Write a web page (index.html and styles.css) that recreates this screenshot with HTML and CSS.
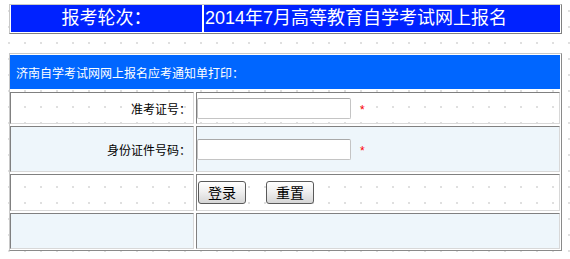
FILE: index.html
```html
<!DOCTYPE html>
<html lang="zh">
<head>
<meta charset="utf-8">
<title>网上报名</title>
<link rel="stylesheet" href="styles.css">
</head>
<body>
<div class="page">
  <div class="topbar">
    <div class="tcell tlabel">报考轮次：</div>
    <div class="tcell tvalue">2014年7月高等教育自学考试网上报名</div>
  </div>

  <form class="form">
    <div class="head">济南自学考试网网上报名应考通知单打印：</div>

    <div class="cell lab r1">准考证号：</div>
    <div class="cell fld r1"><input class="inp" type="text"><span class="req">*</span></div>

    <div class="cell lab r2 alt">身份证件号码：</div>
    <div class="cell fld r2 alt"><input class="inp" type="text"><span class="req">*</span></div>

    <div class="cell r3"></div>
    <div class="cell fld r3"><button class="btn" type="button">登录</button><button class="btn" type="button">重置</button></div>

    <div class="cell r4 alt"></div>
    <div class="cell r4 alt"></div>
  </form>
</div>
</body>
</html>
```

FILE: styles.css
```css
html, body {
  margin: 0;
  padding: 0;
}
body {
  background-color: #ffffff;
  background-image: radial-gradient(circle, #d6d6d6 0.6px, transparent 1.1px);
  background-size: 16px 16px;
  background-position: 1px 3px;
  font-family: "Noto Sans CJK SC", "Liberation Sans", sans-serif;
  font-size: 12px;
  color: #000;
}
.page {
  padding: 4px 0 0 9px;
  width: 553px;
}
.topbar {
  display: flex;
  gap: 2px;
  padding: 0 1px;
  height: 30px;
  box-sizing: border-box;
  border: 1px solid;
  border-color: #c8c8c8 #808080 #808080 #c8c8c8;
  background: #ffffff;
}
.tcell {
  background: #0022ff;
  color: #ffffff;
  font-size: 18px;
  line-height: 27px;
  height: 27px;
  font-family: "Liberation Sans", "Noto Sans CJK SC", sans-serif;
}
.tlabel {
  width: 191px;
  text-align: center;
}
.tvalue {
  flex: 1;
  padding-left: 1px;
}
.form {
  margin: 19px 0 0 0;
  display: grid;
  grid-template-columns: 184px 1fr;
  grid-template-rows: 35px 32px 46px 37px 36px;
  column-gap: 2px;
  row-gap: 2px;
  padding: 1px 1px 1px 0;
  border: 1px solid;
  border-color: #c8c8c8 #8a8a8a #8a8a8a #c8c8c8;
  box-sizing: border-box;
  width: 553px;
}
.head {
  grid-column: 1 / 3;
  background: #0066ff;
  color: #ffffff;
  padding-left: 6px;
  display: flex;
  align-items: center;
  font-size: 12px;
  border-bottom: 1px solid #ffffff;
}
.cell {
  border: 1px solid;
  border-color: #808080 #d8d8d8 #d8d8d8 #808080;
  display: flex;
  align-items: center;
}
.alt {
  background: #eef6fb;
}
.lab {
  justify-content: flex-end;
  padding-right: 2px;
}
.fld {
  padding-left: 0;
}
.inp {
  width: 154px;
  height: 21px;
  box-sizing: border-box;
  border: 1px solid #c4c4c4;
  border-top-color: #a9a9a9;
  border-radius: 2px;
  background: #ffffff;
  margin: 0;
  padding: 0 3px;
}
.req {
  color: #ff0000;
  margin-left: 9px;
  font-family: "Liberation Sans", sans-serif;
  font-size: 12px;
  line-height: 1;
  position: relative;
  top: 2px;
}
.btn {
  height: 23px;
  width: 48px;
  margin: 0 20px 0 1px;
  padding: 0;
  border: 1px solid #5a5a5a;
  border-radius: 3px;
  background: linear-gradient(#ffffff, #f0f0f0 45%, #d6d6d6);
  font-family: "Noto Sans CJK SC", sans-serif;
  font-size: 14px;
  color: #000;
  line-height: 21px;
}
.btn + .btn {
  margin: 0;
}
```
